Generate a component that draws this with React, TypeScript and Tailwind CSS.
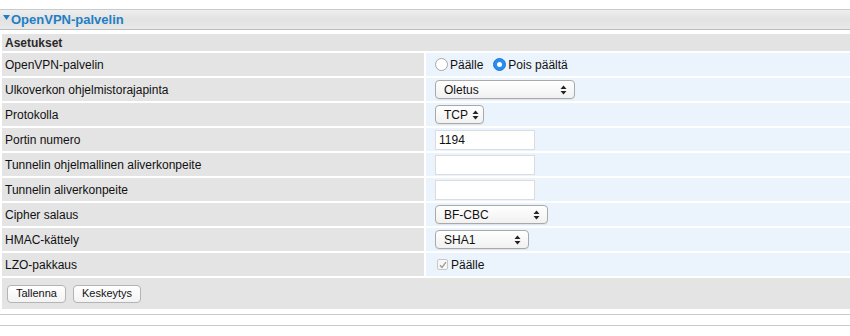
import React from 'react';

const Arrows = () => (
  <svg width="7" height="10" viewBox="0 0 7 10" className="ml-auto shrink-0">
    <path d="M3.5 0.5 L6.5 4 L0.5 4 Z" fill="#222" />
    <path d="M3.5 9.5 L6.5 6 L0.5 6 Z" fill="#222" />
  </svg>
);

const Select: React.FC<{ value: string; w: string }> = ({ value, w }) => (
  <div
    className={`${w} h-[19px] flex items-center gap-[4px] pl-[8px] pr-[7px] rounded-[4px] border border-[#a9a9a9] bg-gradient-to-b from-white to-[#f1f1f1] shadow-[0_1px_0_rgba(0,0,0,0.05)] text-[12px] text-[#111]`}
  >
    <span>{value}</span>
    <Arrows />
  </div>
);

const Input: React.FC<{ value?: string }> = ({ value }) => (
  <div className="w-[100px] h-[20px] bg-white border border-[#dcdcdc] flex items-center px-[3px] text-[12px] text-[#111]">
    {value}
  </div>
);

const Radio: React.FC<{ checked?: boolean; label: string }> = ({ checked, label }) => (
  <div className="flex items-center gap-[2px]">
    {checked ? (
      <span className="w-[13px] h-[13px] rounded-full bg-[#2a8cf0] border border-[#1c7ad9] flex items-center justify-center">
        <span className="w-[5px] h-[5px] rounded-full bg-white" />
      </span>
    ) : (
      <span className="w-[13px] h-[13px] rounded-full bg-white border border-[#a8a8a8]" />
    )}
    <span>{label}</span>
  </div>
);

const rows: { label: string; value: React.ReactNode }[] = [
  {
    label: 'OpenVPN-palvelin',
    value: (
      <div className="flex items-center gap-[10px]">
        <Radio label="Päälle" />
        <Radio checked label="Pois päältä" />
      </div>
    ),
  },
  { label: 'Ulkoverkon ohjelmistorajapinta', value: <Select value="Oletus" w="w-[140px]" /> },
  { label: 'Protokolla', value: <Select value="TCP" w="w-[49px]" /> },
  { label: 'Portin numero', value: <Input value="1194" /> },
  { label: 'Tunnelin ohjelmallinen aliverkonpeite', value: <Input /> },
  { label: 'Tunnelin aliverkonpeite', value: <Input /> },
  { label: 'Cipher salaus', value: <Select value="BF-CBC" w="w-[113px]" /> },
  { label: 'HMAC-kättely', value: <Select value="SHA1" w="w-[94px]" /> },
  {
    label: 'LZO-pakkaus',
    value: (
      <div className="flex items-center gap-[3px] pl-[2px]">
        <span className="w-[11px] h-[11px] rounded-[2px] border border-[#c8c8c8] bg-[#f7f7f7] flex items-center justify-center">
          <svg width="8" height="8" viewBox="0 0 8 8">
            <path d="M1 4.3 L3 6.5 L7 1.2" stroke="#9a9a9a" strokeWidth="1.3" fill="none" />
          </svg>
        </span>
        <span>Päälle</span>
      </div>
    ),
  },
];

const Button: React.FC<{ label: string }> = ({ label }) => (
  <div className="h-[18px] px-[8px] flex items-center rounded-[4px] border border-[#b4b4b4] bg-gradient-to-b from-white to-[#f3f3f3] text-[11px] text-[#111]">
    {label}
  </div>
);

export default function App() {
  return (
    <div className="w-[850px] h-[336px] bg-white font-['Liberation_Sans',Arial,sans-serif] text-[12px] text-[#111] pt-[9px]">
      {/* Section header */}
      <div className="h-[21px] border-t border-b border-t-[#c6cbce] border-b-[#b8bdc0] bg-gradient-to-b from-[#eeeeee] via-[#e2e2e2] to-[#e9e9e9] flex items-center pl-[3px]">
        <svg width="7" height="5" viewBox="0 0 7 5" className="mr-[1px] -mt-[4px]">
          <path d="M0 0 L7 0 L3.5 5 Z" fill="#1f7fc4" />
        </svg>
        <span className="font-bold text-[13px] text-[#1f7fc4]">OpenVPN-palvelin</span>
      </div>

      <div className="mt-[4px] pl-[2px] flex flex-col gap-[2px]">
        <div className="h-[17px] bg-[#e3e3e3] flex items-center pl-[3px] font-bold text-[#2a2a2a] text-[12px]">
          Asetukset
        </div>
        <div className="grid grid-cols-[422px_1fr] gap-[2px]">
          {rows.map((r) => (
            <React.Fragment key={r.label}>
              <div className="h-[23px] bg-[#e4e4e4] flex items-center pl-[3px]">{r.label}</div>
              <div className="h-[23px] bg-[#ebf3fc] flex items-center pl-[9px]">{r.value}</div>
            </React.Fragment>
          ))}
        </div>
        <div className="h-[31px] bg-[#e4e4e4] flex items-center gap-[7px] pl-[5px]">
          <Button label="Tallenna" />
          <Button label="Keskeytys" />
        </div>
      </div>

      <div className="mt-[5px] h-[12px] border-t border-b border-[#c8cacc]" />
    </div>
  );
}
